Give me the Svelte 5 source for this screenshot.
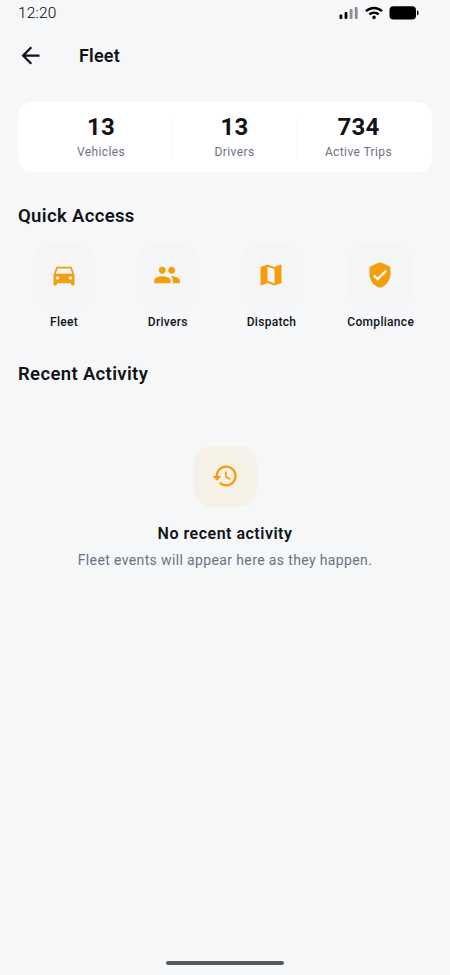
<script>
  const stats = [
    { value: 13, label: 'Vehicles' },
    { value: 13, label: 'Drivers' },
    { value: 734, label: 'Active Trips' }
  ]

  const shortcuts = [
    {
      label: 'Fleet',
      icon: 'M18.92 6.01C18.72 5.42 18.16 5 17.5 5h-11c-.66 0-1.21.42-1.42 1.01L3 12v8c0 .55.45 1 1 1h1c.55 0 1-.45 1-1v-1h12v1c0 .55.45 1 1 1h1c.55 0 1-.45 1-1v-8l-2.08-5.99zM6.5 16c-.83 0-1.5-.67-1.5-1.5S5.67 13 6.5 13s1.5.67 1.5 1.5S7.33 16 6.5 16zm11 0c-.83 0-1.5-.67-1.5-1.5s.67-1.5 1.5-1.5 1.5.67 1.5 1.5-.67 1.5-1.5 1.5zM5 11l1.5-4.5h11L19 11H5z'
    },
    {
      label: 'Drivers',
      icon: 'M16 11c1.66 0 2.99-1.34 2.99-3S17.66 5 16 5s-3 1.34-3 3 1.34 3 3 3zm-8 0c1.66 0 2.99-1.34 2.99-3S9.66 5 8 5 5 6.34 5 8s1.34 3 3 3zm0 2c-2.33 0-7 1.17-7 3.5V19h14v-2.5c0-2.33-4.67-3.5-7-3.5zm8 0c-.29 0-.62.02-.97.05 1.16.84 1.97 1.97 1.97 3.45V19h6v-2.5c0-2.33-4.67-3.5-7-3.5z'
    },
    {
      label: 'Dispatch',
      icon: 'M20.5 3l-.16.03L15 5.1 9 3 3.36 4.9c-.21.07-.36.25-.36.48V20.5c0 .28.22.5.5.5l.16-.03L9 18.9l6 2.1 5.64-1.9c.21-.07.36-.25.36-.48V3.5c0-.28-.22-.5-.5-.5zM15 19l-6-2.11V5l6 2.11V19z'
    },
    {
      label: 'Compliance',
      icon: 'M11.19 1.36l-7 3.11C3.47 4.79 3 5.51 3 6.3V11c0 5.55 3.84 10.74 9 12 5.16-1.26 9-6.45 9-12V6.3c0-.79-.47-1.51-1.19-1.83l-7-3.11c-.51-.23-1.11-.23-1.62 0zM10 17l-4-4 1.41-1.41L10 14.17l6.59-6.59L18 9l-8 8z'
    }
  ]
</script>

<div class="screen">
  <div class="status-bar">
    <span class="time">12:20</span>
    <div class="indicators">
      <svg class="signal" viewBox="0 0 20 14" width="20" height="14">
        <rect x="0.5" y="8.5" width="2.8" height="4.5" rx="1" />
        <rect x="5.6" y="6" width="2.8" height="7" rx="1" />
        <rect class="dim" x="10.7" y="3" width="2.8" height="10" rx="1" />
        <rect class="dim" x="15.8" y="1" width="2.8" height="12" rx="1" />
      </svg>
      <svg class="wifi" viewBox="0 0 18 14" width="18" height="14">
        <path d="M1 5.2C5.6 .9 12.4 .9 17 5.2M4.3 8.4c2.7-2.3 6.7-2.3 9.4 0" />
        <circle cx="9" cy="11.4" r="1.8" />
      </svg>
      <svg class="battery" viewBox="0 0 30 14" width="30" height="14">
        <rect x="0.5" y="0.3" width="26.5" height="13.2" rx="3.8" />
        <path d="M28 4.6c1.3.3 1.6 1.2 1.6 2.4s-.3 2.1-1.6 2.4z" />
      </svg>
    </div>
  </div>

  <header class="app-bar">
    <button class="back" aria-label="Back">
      <svg viewBox="0 0 24 24" width="27" height="27">
        <path d="M20 11H7.83l5.59-5.59L12 4l-8 8 8 8 1.41-1.41L7.83 13H20v-2z" />
      </svg>
    </button>
    <h1>Fleet</h1>
  </header>

  <section class="stats">
    {#each stats as stat}
      <div class="stat">
        <strong>{stat.value}</strong>
        <span>{stat.label}</span>
      </div>
    {/each}
  </section>

  <h2>Quick Access</h2>
  <nav class="shortcuts">
    {#each shortcuts as item}
      <button class="shortcut">
        <span class="tile">
          <svg viewBox="0 0 24 24" width="28" height="28"><path d={item.icon} /></svg>
        </span>
        <span class="label">{item.label}</span>
      </button>
    {/each}
  </nav>

  <h2>Recent Activity</h2>
  <section class="empty">
    <div class="tile warm">
      <svg viewBox="0 0 24 24" width="28" height="28">
        <path d="M13.26 3C8.17 2.86 4 6.95 4 12H2.21c-.45 0-.67.54-.35.85l2.79 2.8c.2.2.51.2.71 0l2.79-2.8c.31-.31.09-.85-.36-.85H6c0-3.9 3.18-7.05 7.1-7 3.72.05 6.85 3.18 6.9 6.9.05 3.91-3.1 7.1-7 7.1-1.61 0-3.1-.55-4.28-1.48-.4-.31-.96-.28-1.32.08-.42.42-.39 1.13.08 1.49C9 20.29 10.91 21 13 21c5.05 0 9.14-4.17 9-9.26-.13-4.69-4.05-8.61-8.74-8.74zm-.51 5c-.41 0-.75.34-.75.75v3.68c0 .35.19.68.49.86l3.12 1.85c.36.21.82.09 1.03-.26.21-.36.09-.82-.26-1.03l-2.88-1.71v-3.4c0-.4-.34-.74-.75-.74z" />
      </svg>
    </div>
    <h3>No recent activity</h3>
    <p>Fleet events will appear here as they happen.</p>
  </section>

  <div class="home-indicator"></div>
</div>

<style>
  :global(body) {
    background: #f5f7f9;
  }

  .screen {
    box-sizing: border-box;
    height: 975px;
    padding: 0 18px 10.5px;
    display: flex;
    flex-direction: column;
    overflow: hidden;
    background: #f5f7f9;
    color: #111318;
    font-family: Roboto, sans-serif;
  }

  svg {
    display: block;
    fill: currentColor;
  }

  h1,
  h2,
  h3,
  p {
    margin: 0;
  }

  button {
    padding: 0;
    border: 0;
    background: none;
    color: inherit;
    font: inherit;
  }

  .status-bar {
    height: 25px;
    display: flex;
    align-items: center;
    justify-content: space-between;
    padding-right: 13px;
    color: #000;
  }

  .time {
    font-size: 15.5px;
    font-weight: 300;
    line-height: 26px;
    letter-spacing: 0.15px;
  }

  .indicators {
    display: flex;
    align-items: center;
    gap: 6px;
  }

  .signal .dim {
    fill: #8b8d90;
  }

  .wifi path {
    fill: none;
    stroke: currentColor;
    stroke-width: 2.4;
  }

  .app-bar {
    height: 61px;
    margin-left: -1px;
    display: flex;
    align-items: center;
    gap: 35px;
  }

  h1 {
    font-size: 18px;
    font-weight: 600;
    line-height: 24px;
    letter-spacing: 0.2px;
  }

  .stats {
    box-sizing: border-box;
    height: 70px;
    margin-top: 16px;
    padding: 0 12px;
    display: grid;
    grid-template-columns: 143px 124px 123px;
    align-items: center;
    border-radius: 14px;
    background: #fff;
  }

  .stat {
    height: 46px;
    display: flex;
    flex-direction: column;
    align-items: center;
    border-right: 1px solid #fbfbfc;
  }

  .stat:last-child {
    border-right: 0;
  }

  .stat strong {
    font-size: 24px;
    font-weight: 700;
    line-height: 26px;
    letter-spacing: 0.2px;
  }

  .stat span {
    font-size: 12px;
    line-height: 16px;
    margin-top: 4px;
    letter-spacing: 0.4px;
    color: #6b7280;
  }

  h2 {
    margin-top: 32px;
    font-size: 18.5px;
    font-weight: 600;
    line-height: 24px;
    letter-spacing: 0.35px;
  }

  .shortcuts {
    margin: 17px -6px 0;
    display: grid;
    grid-template-columns: 104px 103.5px 104px 114.5px;
  }

  .shortcut {
    display: flex;
    flex-direction: column;
    align-items: center;
  }

  .tile {
    box-sizing: border-box;
    width: 63px;
    height: 61px;
    padding: 0 1px 2px 0;
    display: flex;
    align-items: center;
    justify-content: center;
    border-radius: 18px;
    background: #f3f5f7;
    color: #f59e0b;
  }

  .label {
    margin-top: 8px;
    font-size: 12px;
    font-weight: 500;
    line-height: 16px;
    letter-spacing: 0.3px;
  }

  .empty {
    flex: 1;
    padding-top: 60px;
    display: flex;
    flex-direction: column;
    align-items: center;
  }

  .tile.warm {
    background: #f5f1e6;
  }

  h3 {
    margin-top: 16px;
    font-size: 16px;
    font-weight: 600;
    line-height: 22px;
    letter-spacing: 0.5px;
  }

  p {
    margin-top: 4px;
    font-size: 14px;
    line-height: 22px;
    letter-spacing: 0.37px;
    color: #6b7280;
  }

  .home-indicator {
    width: 118px;
    height: 4px;
    align-self: center;
    border-radius: 2px;
    background: #55585b;
  }
</style>
